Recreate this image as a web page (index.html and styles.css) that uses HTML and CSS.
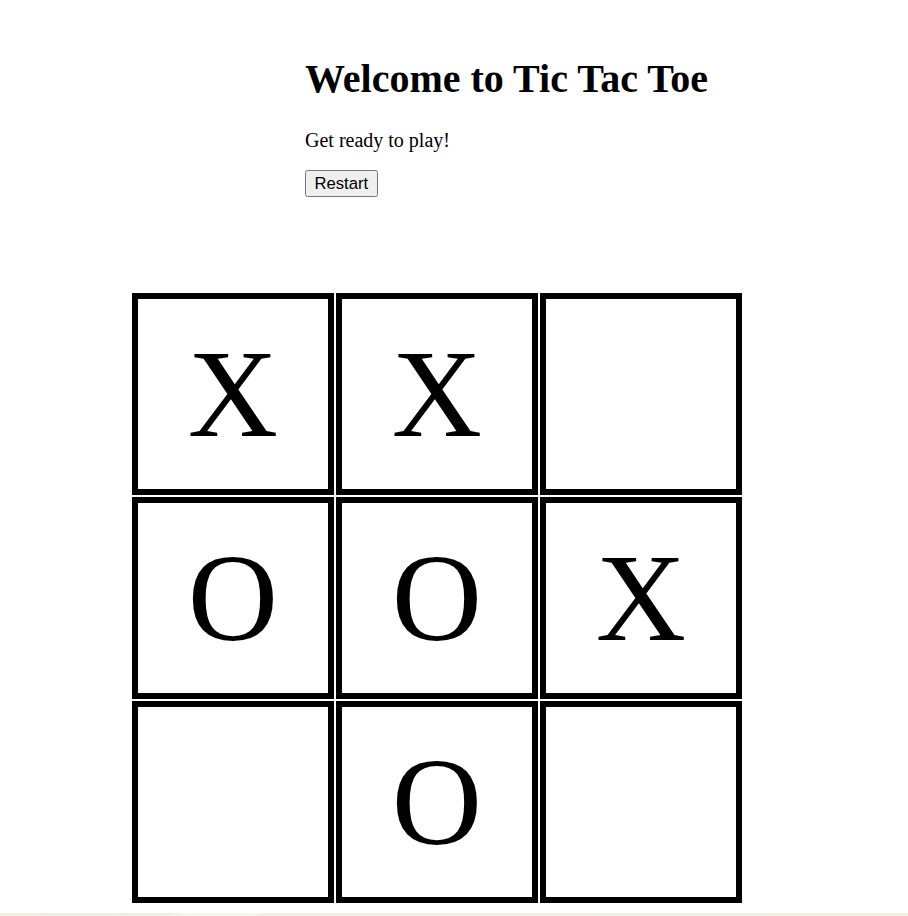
FILE: index.html
```html
<!DOCTYPE html>
<html lang="en">
<head>
<meta charset="utf-8">
<title>Tic Tac Toe</title>
<link rel="stylesheet" href="styles.css">
</head>
<body>
<div class="header">
  <h1 class="title">Welcome to Tic Tac Toe</h1>
  <p class="status">Get ready to play!</p>
  <button class="restart" type="button">Restart</button>
</div>
<div class="board">
  <div class="cell">X</div>
  <div class="cell">X</div>
  <div class="cell"></div>
  <div class="cell">O</div>
  <div class="cell">O</div>
  <div class="cell">X</div>
  <div class="cell"></div>
  <div class="cell">O</div>
  <div class="cell"></div>
</div>
<div class="strip"></div>
</body>
</html>
```
FILE: styles.css
```css
html, body {
  margin: 0;
  padding: 0;
  background: #fff;
  overflow: hidden;
}
body {
  font-family: "Liberation Serif", "Times New Roman", serif;
  color: #000;
}
.header {
  padding: 28.7px 0 0 305px;
}
.title {
  font-size: 40px;
  font-weight: bold;
  margin: 26.8px 0;
}
.status {
  font-size: 20px;
  margin: 20px 0 18px;
}
.restart {
  display: block;
  font: 16.67px "Liberation Sans", Arial, sans-serif;
  color: #000;
  padding: 2.5px 8.5px;
  border: 1px solid #767676;
  border-radius: 2.5px;
  background: #efefef;
}
.board {
  display: grid;
  grid-template-columns: repeat(3, 202px);
  grid-auto-rows: 202px;
  gap: 2px;
  margin: 95.7px 0 0 132px;
}
.cell {
  box-sizing: border-box;
  border: 6px solid #000;
  font-size: 125px;
  line-height: 190px;
  text-align: center;
}
.strip {
  margin-top: 10px;
  height: 3px;
  background: linear-gradient(90deg, #eeeee2 0%, #eceee6 18%, #f6f7f0 20.5%, #f6f7f0 28%, #efeee0 29%, #eeeee2 100%);
}
```
